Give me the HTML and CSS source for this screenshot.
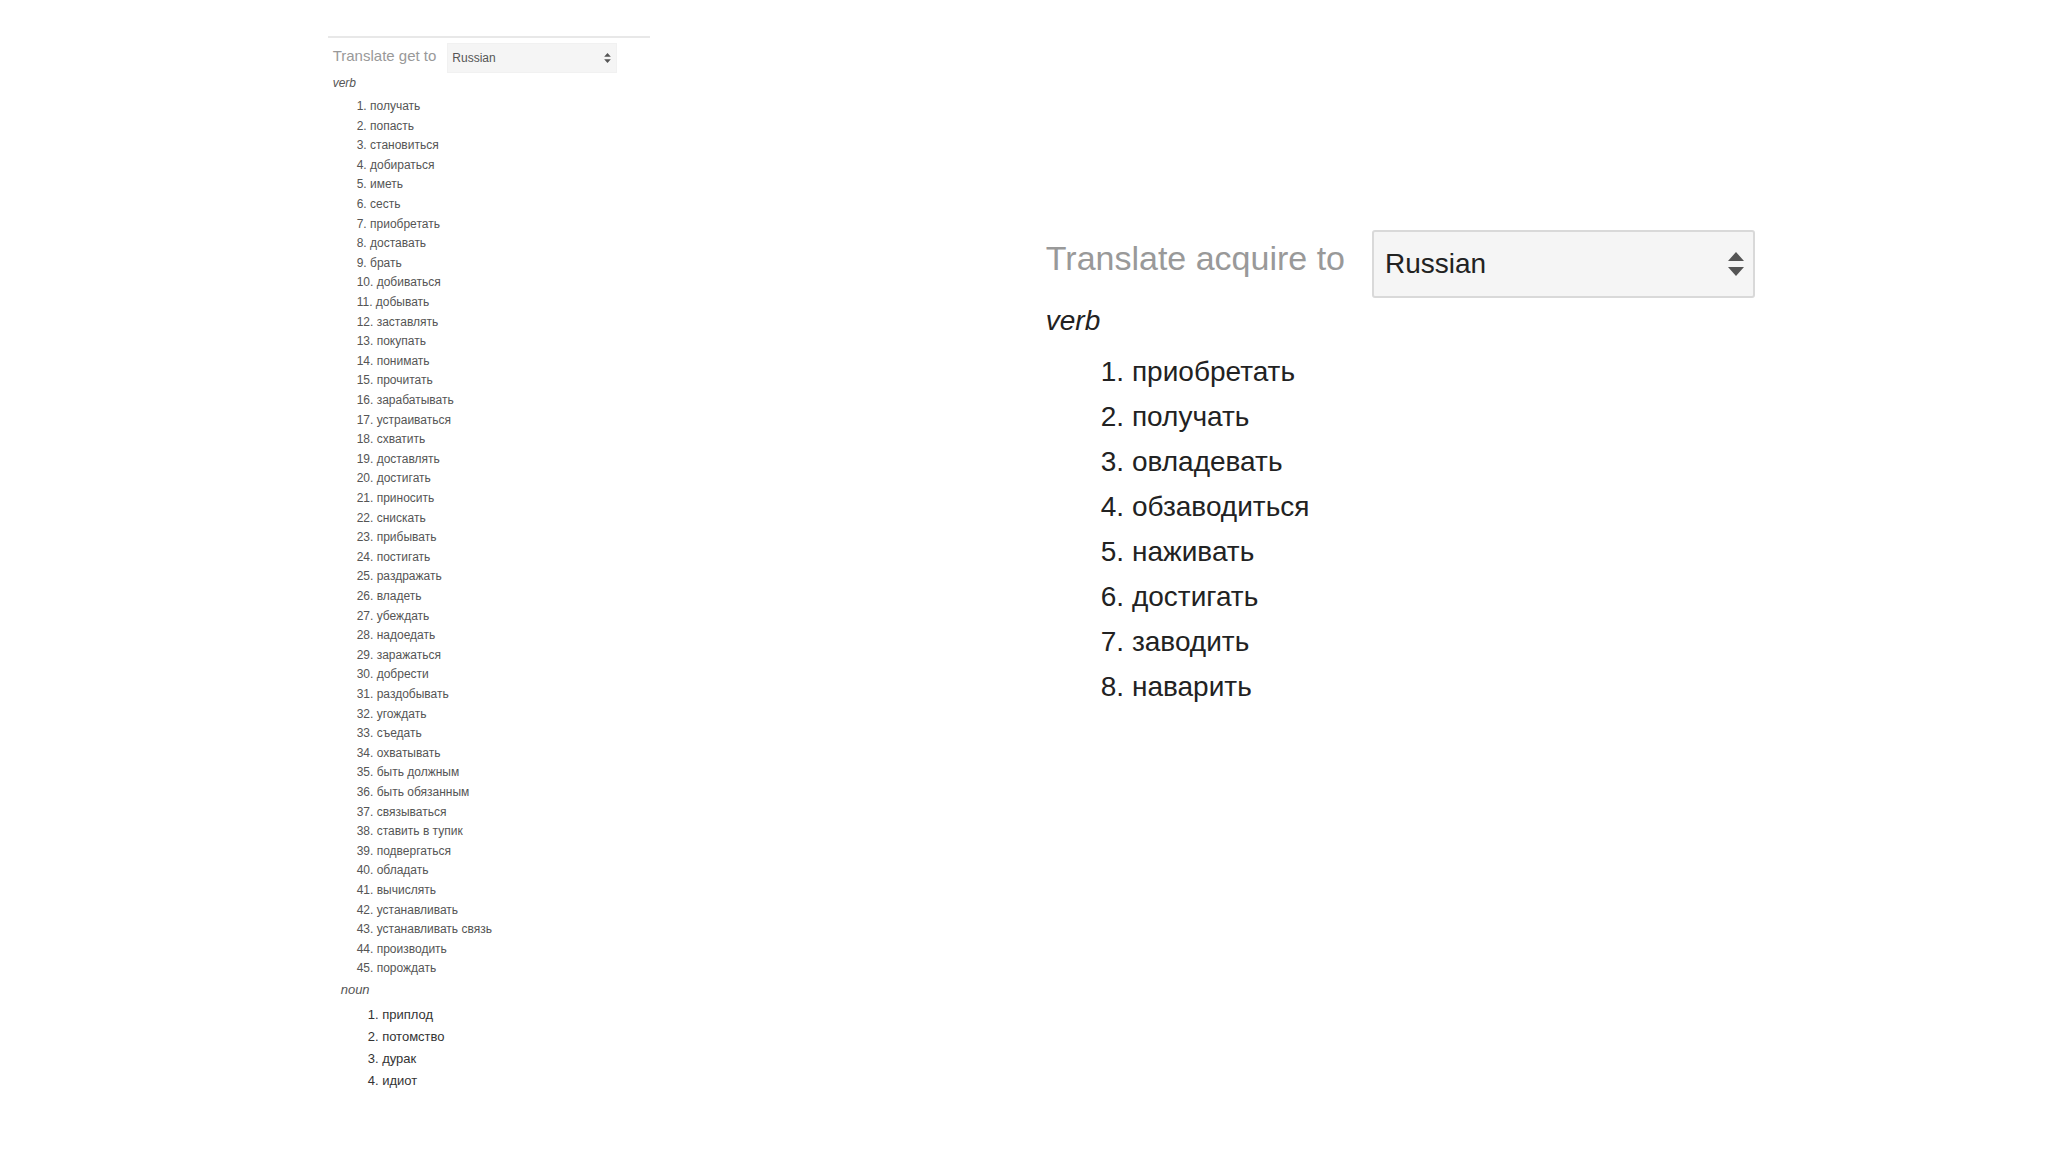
FILE: index.html
```html
<!DOCTYPE html>
<html lang="en">
<head>
  <meta charset="UTF-8">
  <meta name="viewport" content="width=device-width, initial-scale=1.0">
  <title>Translations: get, acquire</title>
  <link rel="stylesheet" href="styles.css">
</head>
<body>
  <main class="page">
    <section class="panel small">
      <div class="translate">
        <label for="getLang">Translate get to</label>
        <div class="picker">
          <select id="getLang">
            <option>Russian</option>
          </select>
          <svg class="arrows" viewBox="0 0 16 24" aria-hidden="true"><path d="M8 0l8 9H0zM8 24l8-9H0z"/></svg>
        </div>
      </div>
      <p class="part">verb</p>
      <ol class="words" lang="ru">
        <li>получать</li>
        <li>попасть</li>
        <li>становиться</li>
        <li>добираться</li>
        <li>иметь</li>
        <li>сесть</li>
        <li>приобретать</li>
        <li>доставать</li>
        <li>брать</li>
        <li>добиваться</li>
        <li>добывать</li>
        <li>заставлять</li>
        <li>покупать</li>
        <li>понимать</li>
        <li>прочитать</li>
        <li>зарабатывать</li>
        <li>устраиваться</li>
        <li>схватить</li>
        <li>доставлять</li>
        <li>достигать</li>
        <li>приносить</li>
        <li>снискать</li>
        <li>прибывать</li>
        <li>постигать</li>
        <li>раздражать</li>
        <li>владеть</li>
        <li>убеждать</li>
        <li>надоедать</li>
        <li>заражаться</li>
        <li>добрести</li>
        <li>раздобывать</li>
        <li>угождать</li>
        <li>съедать</li>
        <li>охватывать</li>
        <li>быть должным</li>
        <li>быть обязанным</li>
        <li>связываться</li>
        <li>ставить в тупик</li>
        <li>подвергаться</li>
        <li>обладать</li>
        <li>вычислять</li>
        <li>устанавливать</li>
        <li>устанавливать связь</li>
        <li>производить</li>
        <li>порождать</li>
      </ol>
      <div class="noun">
        <p class="part">noun</p>
        <ol class="words" lang="ru">
          <li>приплод</li>
          <li>потомство</li>
          <li>дурак</li>
          <li>идиот</li>
        </ol>
      </div>
    </section>

    <section class="panel large">
      <div class="translate">
        <label for="acquireLang">Translate acquire to</label>
        <div class="picker">
          <select id="acquireLang">
            <option>Russian</option>
          </select>
          <svg class="arrows" viewBox="0 0 16 24" aria-hidden="true"><path d="M8 0l8 9H0zM8 24l8-9H0z"/></svg>
        </div>
      </div>
      <p class="part">verb</p>
      <ol class="words" lang="ru">
        <li>приобретать</li>
        <li>получать</li>
        <li>овладевать</li>
        <li>обзаводиться</li>
        <li>наживать</li>
        <li>достигать</li>
        <li>заводить</li>
        <li>наварить</li>
      </ol>
    </section>
  </main>
</body>
</html>
```
FILE: styles.css
```css
* {
  box-sizing: border-box;
}
body {
  margin: 0;
  background-color: #fff;
  color: #222;
  font-family: "Liberation Sans", Arial, sans-serif;
}
.page {
  display: grid;
  grid-template-columns: 718fr 1002fr;
  align-items: start;
  padding: 36px 0 40px 16%;
}
.translate {
  display: flex;
  align-items: flex-start;
}
.translate label {
  color: #999;
  white-space: nowrap;
}
.part {
  margin: 0;
  font-style: italic;
}
.words {
  margin: 0;
  padding: 0;
  list-style-position: inside;
}
.picker {
  position: relative;
}
select {
  display: block;
  width: 100%;
  appearance: none;
  background-color: #f5f5f5;
  border: 1px solid #f1f1f1;
  color: inherit;
  font-family: inherit;
  font-size: inherit;
}
.arrows {
  position: absolute;
  top: 50%;
  transform: translateY(-50%);
  fill: #555;
  pointer-events: none;
}

/* long list */
.small {
  max-width: 322px;
  padding-left: 5px;
  border-top: 2px solid #e8e8e8;
  color: #555;
  font-size: 12px;
}
.small .translate {
  gap: 11px;
  padding-top: 5px;
}
.small label {
  font-size: 15px;
  line-height: 26px;
}
.small .picker {
  width: 170px;
}
.small select {
  height: 30px;
  padding: 0 4px;
}
.small .arrows {
  right: 6px;
  width: 7px;
  height: 10px;
}
.small .part {
  line-height: 20px;
}
/* 45 equal rows */
.small > .words {
  display: grid;
  grid-auto-rows: 1fr;
  height: 882px;
  margin-top: 4px;
  padding-left: 24px;
  line-height: 19px;
}
.noun {
  padding-left: 8px;
  font-size: 13px;
}
.noun .part {
  padding: 1px 0 4px;
}
.noun .words {
  padding-left: 27px;
  color: #333;
  line-height: 22px;
}

/* short list */
.large {
  margin-top: 194px;
  font-size: 28px;
}
.large .translate {
  gap: 27px;
}
.large label {
  font-size: 34px;
  line-height: 56px;
}
.large .picker {
  width: 383px;
}
.large select {
  height: 68px;
  padding: 0 11px 2px;
  border: 2px solid #d9d9d9;
  border-radius: 3px;
}
.large .arrows {
  right: 11px;
  width: 16px;
  height: 24px;
}
.large .part {
  line-height: 45px;
}
.large .words {
  margin-top: 6px;
  padding-left: 55px;
  line-height: 45px;
}
```
